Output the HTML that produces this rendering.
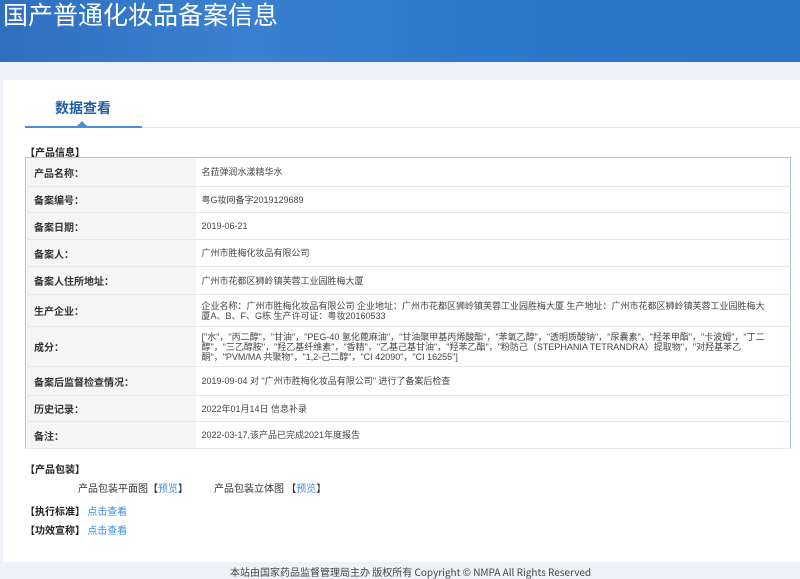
<!DOCTYPE html>
<html><head><meta charset="utf-8"><style>
*{margin:0;padding:0;box-sizing:border-box}
body{width:800px;height:576px;overflow:hidden;background:#eef2f6;font-family:"Liberation Sans","Noto Sans CJK SC",sans-serif;color:#333;position:relative}
.hd{position:absolute;left:0;top:0;width:800px;height:62px;background:linear-gradient(90deg,#2f6fc0 0%,#3b80d0 30%,#2c78cc 60%,#2a74c6 100%)}
.hd h1{position:absolute;left:3px;top:-4px;font-size:25px;font-weight:normal;color:#fff;font-family:"Noto Sans CJK SC",sans-serif;letter-spacing:0px}
.card{position:absolute;left:3px;top:80px;width:797px;height:482px;background:#fff}
.tab{position:absolute;left:55px;top:98px;font-size:14px;color:#1f5fa8;font-weight:bold;font-family:"Noto Sans CJK SC",sans-serif}
.line{position:absolute;left:25px;top:127px;width:775px;height:1px;background:#e2e6ea}
.uline{position:absolute;left:25px;top:126px;width:117px;height:2px;background:#4a90d9}
.tri{position:absolute;left:77px;top:121px;width:0;height:0;border-left:5px solid transparent;border-right:5px solid transparent;border-bottom:5px solid #4a90d9}
.sec{position:absolute;font-size:10px;font-weight:bold;color:#222;font-family:"Noto Sans CJK SC",sans-serif}
table{position:absolute;left:25px;top:157px;width:766px;border-collapse:collapse;border:1px solid #a9c4e4;font-size:9px}
td{border-bottom:1px solid #e8e8e8;vertical-align:middle;font-family:"Liberation Sans","Noto Sans CJK SC",sans-serif}
td.l{width:170px;background:#f5f5f5;padding-left:8px;font-weight:bold;font-size:10px;color:#333}
td.v{padding:0 22px 0 6px;color:#444;line-height:10px}
a{color:#3a8ee6;text-decoration:none}
.t{position:absolute;font-size:10px;color:#333;font-family:"Noto Sans CJK SC",sans-serif}
.ft{position:absolute;left:230px;top:564px;font-size:10px;color:#444;font-family:"Noto Sans CJK SC",sans-serif}
</style></head><body>
<div class="hd"><h1>国产普通化妆品备案信息</h1></div>
<div class="card"></div>
<div class="tab">数据查看</div>
<div class="line"></div><div class="uline"></div><div class="tri"></div>
<div class="sec" style="left:25px;top:144px">【产品信息】</div>
<table>
<tr style="height:29px"><td class="l">产品名称：</td><td class="v">名菈弹润水漾精华水</td></tr>
<tr style="height:26px"><td class="l">备案编号：</td><td class="v">粤G妆网备字2019129689</td></tr>
<tr style="height:27px"><td class="l">备案日期：</td><td class="v">2019-06-21</td></tr>
<tr style="height:27px"><td class="l">备案人：</td><td class="v">广州市胜梅化妆品有限公司</td></tr>
<tr style="height:28px"><td class="l">备案人住所地址：</td><td class="v">广州市花都区狮岭镇芙蓉工业园胜梅大厦</td></tr>
<tr style="height:32px"><td class="l">生产企业：</td><td class="v">企业名称：广州市胜梅化妆品有限公司 企业地址：广州市花都区狮岭镇芙蓉工业园胜梅大厦 生产地址：广州市花都区狮岭镇芙蓉工业园胜梅大厦A、B、F、G栋 生产许可证：粤妆20160533</td></tr>
<tr style="height:40px"><td class="l">成分：</td><td class="v">["水"，"丙二醇"，"甘油"，"PEG-40 氢化蓖麻油"，"甘油聚甲基丙烯酸酯"，"苯氧乙醇"，"透明质酸钠"，"尿囊素"，"羟苯甲酯"，"卡波姆"，"丁二醇"，"三乙醇胺"，"羟乙基纤维素"，"香精"，"乙基己基甘油"，"羟苯乙酯"，"粉防己（STEPHANIA TETRANDRA）提取物"，"对羟基苯乙酮"，"PVM/MA 共聚物"，"1,2-己二醇"，"CI 42090"，"CI 16255"]</td></tr>
<tr style="height:29px"><td class="l">备案后监督检查情况：</td><td class="v">2019-09-04 对 "广州市胜梅化妆品有限公司" 进行了备案后检查</td></tr>
<tr style="height:26px"><td class="l">历史记录：</td><td class="v">2022年01月14日 信息补录</td></tr>
<tr style="height:27px"><td class="l">备注：</td><td class="v">2022-03-17,该产品已完成2021年度报告</td></tr>
</table>
<div class="sec" style="left:25px;top:461px">【产品包装】</div>
<div class="t" style="left:78px;top:480px">产品包装平面图【<a>预览</a>】</div>
<div class="t" style="left:214px;top:480px">产品包装立体图 【<a>预览</a>】</div>
<div class="sec" style="left:25px;top:503px">【执行标准】 <a style="font-weight:normal">点击查看</a></div>
<div class="sec" style="left:25px;top:522px">【功效宣称】 <a style="font-weight:normal">点击查看</a></div>
<div class="ft">本站由国家药品监督管理局主办 版权所有 Copyright © NMPA All Rights Reserved</div>
</body></html>
